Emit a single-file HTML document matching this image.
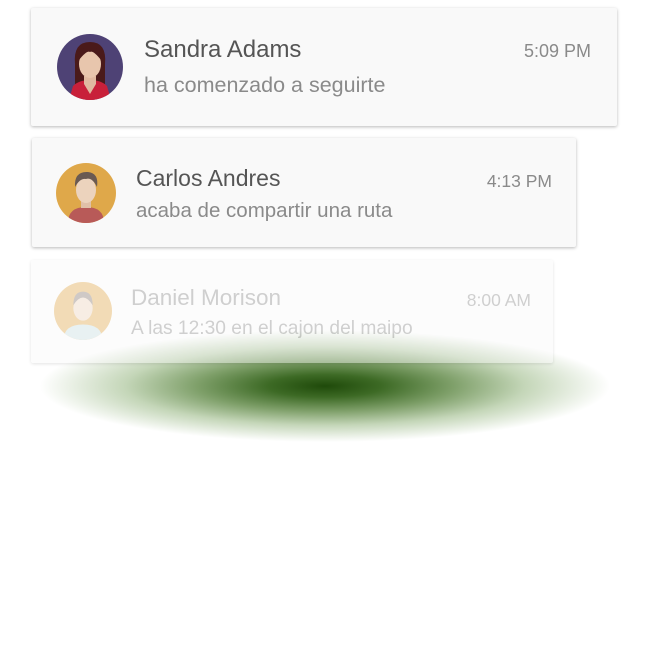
<!DOCTYPE html><html><head><style>
body{margin:0;width:650px;height:650px;background:#fff;position:relative;overflow:hidden;font-family:"Liberation Sans",sans-serif}
.glow{position:absolute;left:40px;top:330px;width:570px;height:112px;border-radius:50%;background:radial-gradient(ellipse closest-side at center,#1f4a0a 0%,#3d6a25 20%,#7fa06a 45%,#c4d6b8 70%,rgba(255,255,255,0) 100%)}
.card{position:absolute;background:#f9f9f9;box-shadow:0 1px 3px rgba(0,0,0,.28);border-radius:2px}
.n{position:absolute;color:#555}
.s{position:absolute;color:#8a8a8a}
.t{position:absolute;color:#8a8a8a;text-align:right}
</style></head><body>
<div class="glow"></div>
<div class="card" style="left:31px;top:8px;width:586px;height:118px">
<svg style="position:absolute;left:26px;top:26px" width="66" height="66" viewBox="0 0 66 66"><defs><clipPath id="c1"><circle cx="33" cy="33" r="33"/></clipPath></defs><g clip-path="url(#c1)"><rect width="66" height="66" fill="#4e4275"/><path d="M18 30 Q16 8 33 8 Q50 8 48 30 L48 50 L18 50Z" fill="#4a1a1a"/><path d="M12 66 L16 52 Q22 46 33 46 Q44 46 50 52 L54 66Z" fill="#c8203a"/><path d="M27 42 h12 v8 l-6 10 -6-10Z" fill="#e0b9a0"/><ellipse cx="33" cy="30" rx="11" ry="14" fill="#e8c6ad"/><path d="M22 26 Q24 12 33 12 Q42 12 44 26 Q36 16 33 18 Q30 16 22 26Z" fill="#4a1a1a"/></g></svg>
<div class="n" style="left:113px;top:28px;font-size:24px">Sandra Adams</div>
<div class="s" style="left:113px;top:65px;font-size:21.5px">ha comenzado a seguirte</div>
<div class="t" style="right:26px;top:33px;font-size:18px">5:09 PM</div>
</div>
<div class="card" style="left:32px;top:138px;width:544px;height:109px">
<svg style="position:absolute;left:24px;top:25px" width="60" height="60" viewBox="0 0 60 60"><defs><clipPath id="c2"><circle cx="30" cy="30" r="30"/></clipPath></defs><g clip-path="url(#c2)"><rect width="60" height="60" fill="#dfa84a"/><path d="M12 60 Q12 44 30 44 Q48 44 48 60Z" fill="#b85a58"/><rect x="25" y="36" width="10" height="9" fill="#e0c0a8"/><ellipse cx="30" cy="27" rx="10" ry="13" fill="#ecd3bd"/><path d="M19 24 Q18 8 32 9 Q43 10 41 24 Q36 14 30 16 Q24 15 19 24Z" fill="#6a5a52"/></g></svg>
<div class="n" style="left:104px;top:27px;font-size:23px">Carlos Andres</div>
<div class="s" style="left:104px;top:61px;font-size:20.5px">acaba de compartir una ruta</div>
<div class="t" style="right:24px;top:33px;font-size:17.5px">4:13 PM</div>
</div>
<div class="card" style="left:31px;top:260px;width:522px;height:103px;opacity:.4">
<svg style="position:absolute;left:23px;top:22px" width="58" height="58" viewBox="0 0 60 60"><defs><clipPath id="c3"><circle cx="30" cy="30" r="30"/></clipPath></defs><g clip-path="url(#c3)"><rect width="60" height="60" fill="#dfa84a"/><path d="M10 60 Q10 44 30 44 Q50 44 50 60Z" fill="#c8dde0"/><ellipse cx="30" cy="27" rx="10" ry="13" fill="#ecd3bd"/><path d="M20 24 Q20 10 30 10 Q40 10 40 24 Q35 16 30 16 Q25 16 20 24Z" fill="#8a7a72"/></g></svg>
<div class="n" style="left:100px;top:25px;font-size:22.5px;color:#888">Daniel Morison</div>
<div class="s" style="left:100px;top:58px;font-size:19.2px">A las 12:30 en el cajon del maipo</div>
<div class="t" style="right:22px;top:30px;font-size:17.5px">8:00 AM</div>
</div>
</body></html>
